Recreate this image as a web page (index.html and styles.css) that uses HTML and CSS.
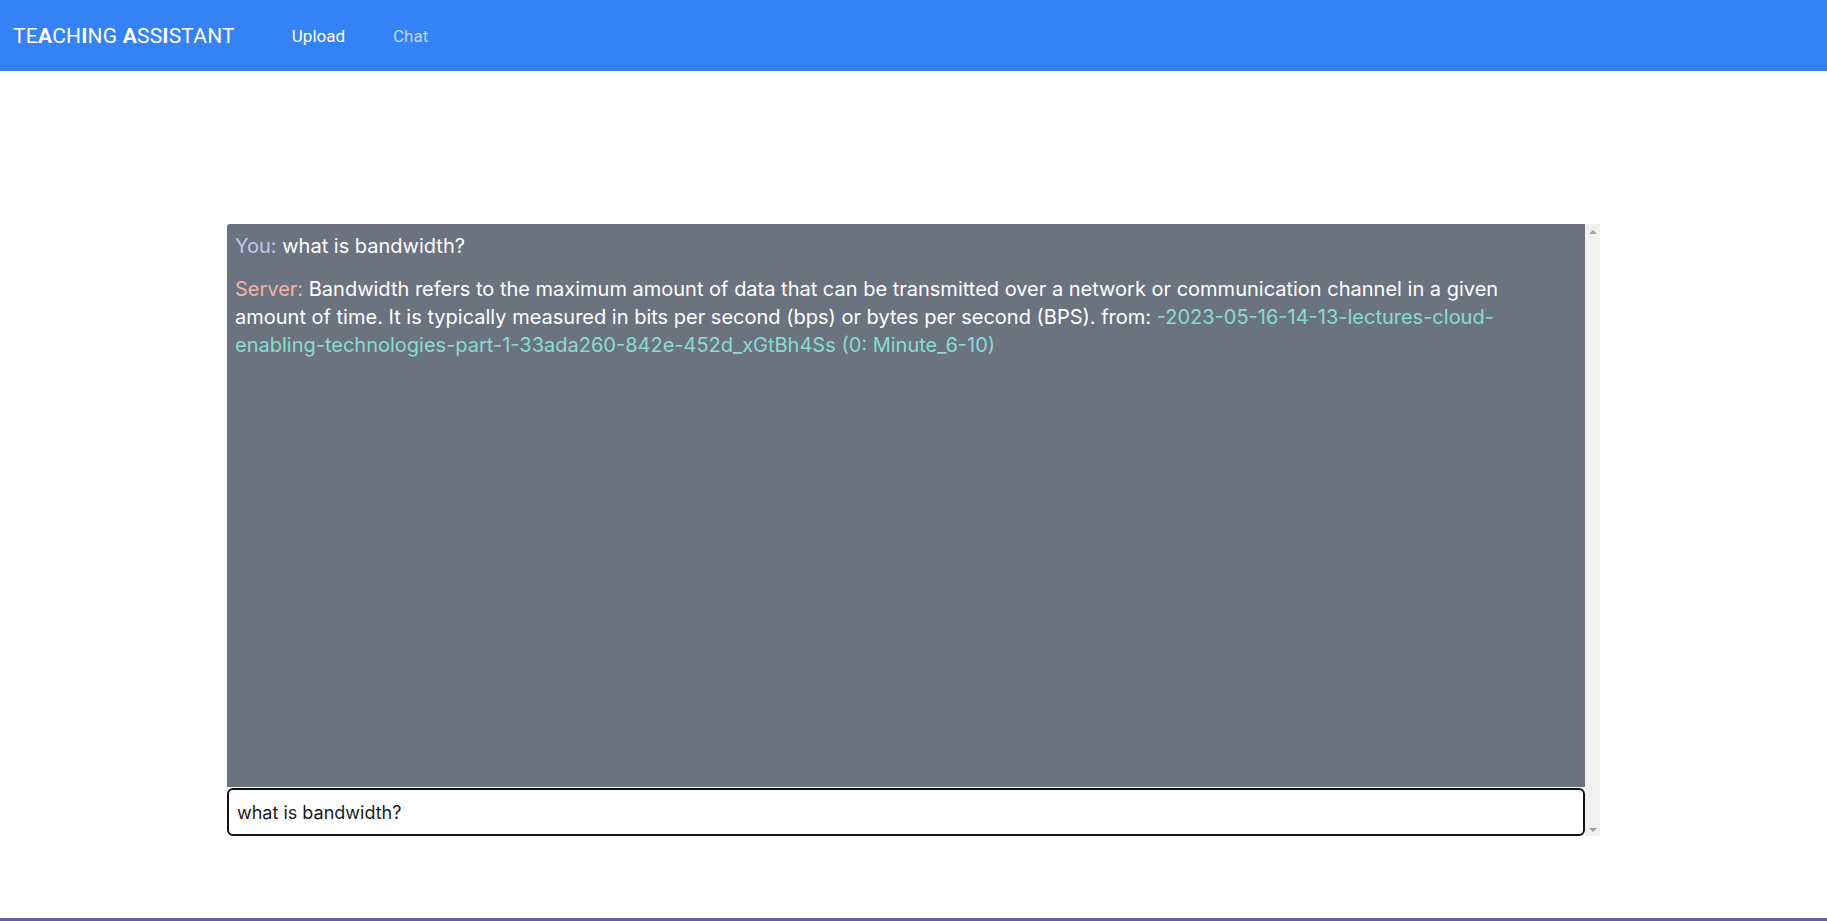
FILE: index.html
```
<!DOCTYPE html>
<html lang="en">
    <head>
        <meta charset="UTF-8">
        <meta name="viewport" content="width=device-width, initial-scale=1.0">
        <title>Teaching Assistant</title>
        <link rel="stylesheet" href="styles.css">
    </head>
    <body>
        <nav class="navbar">
            <div class="brand">TE<b>A</b>CH<b>I</b>NG <b>A</b>SS<b>I</b>STANT</div>
            <a class="nav-link active" href="#">Upload</a>
            <a class="nav-link" href="#">Chat</a>
        </nav>
        <main class="page">
            <div class="chat">
                <div class="chat-main">
                    <div class="messages">
                        <p class="msg"><span class="you">You:</span> what is bandwidth?</p>
                        <p class="msg"><span class="server">Server:</span> Bandwidth refers to the maximum amount of data that can be transmitted over a network or communication channel in a given amount of time. It is typically measured in bits per second (bps) or bytes per second (BPS). from: <span class="source">-2023-05-16-14-13-lectures-cloud-enabling-technologies-part-1-33ada260-842e-452d_xGtBh4Ss (0: Minute_6-10)</span></p>
                    </div>
                    <input class="question" type="text" value="what is bandwidth?">
                </div>
                <div class="scrollbar">
                    <span class="arrow up"></span>
                    <span class="arrow down"></span>
                </div>
            </div>
        </main>
        <footer class="footer"></footer>
    </body>
</html>
```
FILE: styles.css
```
html,
body {
    margin: 0;
    height: 100%;
}

body {
    display: flex;
    flex-direction: column;
    background-color: #fff;
    font-family: Roboto, "Liberation Sans", sans-serif;
}

.navbar {
    height: 71px;
    background-color: #3482f6;
    display: flex;
    align-items: center;
    padding-left: 13px;
    flex-shrink: 0;
}

.brand {
    color: #fff;
    font-size: 21px;
    letter-spacing: 0.2px;
    margin-right: 57px;
}

.brand b {
    font-weight: 700;
}

.nav-link {
    color: #bfd7fb;
    text-decoration: none;
    font-size: 17px;
    margin-right: 48px;
}

.nav-link.active {
    color: #fff;
}

.page {
    flex: 1;
    padding-top: 153px;
}

.chat {
    width: 1373px;
    margin: 0 auto;
    height: 612px;
    display: flex;
}

.chat-main {
    flex: 1;
    display: flex;
    flex-direction: column;
}

.messages {
    flex: 1;
    background-color: #6b7280;
    border-radius: 3px 0 0 0;
    padding: 4px 55px 4px 8px;
    color: #fff;
    font-family: Inter, "Noto Sans", sans-serif;
    font-size: 20px;
    line-height: 28px;
}

.msg {
    margin: 4px 0 15px;
}

.you {
    color: #bccbec;
}

.server {
    color: #f0b4ab;
}

.source {
    color: #8adcd3;
}

.question {
    height: 48px;
    box-sizing: border-box;
    margin-top: 1px;
    border: 2px solid #111;
    border-radius: 6px;
    padding: 0 8px;
    font-family: Inter, "Noto Sans", sans-serif;
    font-size: 18px;
    color: #1a1a1a;
    outline: none;
}

.scrollbar {
    width: 15px;
    background-color: #f1f1f2;
    display: flex;
    flex-direction: column;
    justify-content: space-between;
    align-items: center;
    padding: 6px 0 4px;
    box-sizing: border-box;
}

.arrow {
    width: 0;
    height: 0;
    border-left: 4px solid transparent;
    border-right: 4px solid transparent;
}

.arrow.up {
    border-bottom: 4px solid #a3a3a3;
}

.arrow.down {
    border-top: 4px solid #a3a3a3;
}

.footer {
    height: 3px;
    background-color: #6a5ca6;
    flex-shrink: 0;
}
```
